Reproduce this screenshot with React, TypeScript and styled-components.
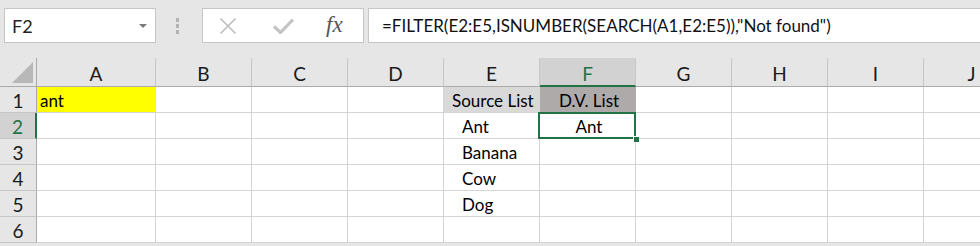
import React from "react";
import styled, { createGlobalStyle, css } from "styled-components";

const Global = createGlobalStyle`
  html, body { margin: 0; padding: 0; background: #e6e6e6; overflow: hidden; }
  body { font-family: Lato, "Noto Sans", sans-serif; }
`;

const Page = styled.div`
  width: 980px;
  height: 246px;
  background: #e6e6e6;
  overflow: hidden;
`;

const Toolbar = styled.div`
  height: 58px;
  display: flex;
  align-items: flex-start;
  padding: 8px 0 0 4px;
  box-sizing: border-box;
`;

const NameBox = styled.div`
  width: 152px;
  height: 35px;
  box-sizing: border-box;
  background: #fff;
  border: 1px solid #c6c6c6;
  display: flex;
  align-items: center;
  justify-content: space-between;
  padding: 0 8px 0 7px;
  font-size: 18px;
  color: #222;
`;

const Caret = styled.span`
  width: 0;
  height: 0;
  border-left: 4px solid transparent;
  border-right: 4px solid transparent;
  border-top: 4px solid #7a7a7a;
`;

const Grip = styled.div`
  width: 4px;
  margin: 10px 22px 0 20px;
  display: flex;
  flex-direction: column;
  gap: 2px;
  span { display: block; width: 3px; height: 4px; background: #b3b3b3; }
`;

const IconBox = styled.div`
  width: 162px;
  height: 35px;
  box-sizing: border-box;
  background: #fff;
  border: 1px solid #c6c6c6;
  display: flex;
  align-items: center;
  padding-left: 16px;
`;

const IconSlot = styled.div<{ $w: number }>`
  width: ${(p) => p.$w}px;
  display: flex;
  align-items: center;
`;

const Fx = styled.span`
  font-family: "Liberation Serif", serif;
  font-style: italic;
  font-size: 23px;
  color: #555;
  margin-top: -2px;
`;

const FormulaInput = styled.div`
  margin-left: 4px;
  flex: 1;
  height: 35px;
  box-sizing: border-box;
  background: #fff;
  border: 1px solid #c6c6c6;
  border-right: none;
  display: flex;
  align-items: center;
  padding-left: 13px;
  font-size: 17px;
  color: #111;
  white-space: nowrap;
`;

const COLS = [37, 119, 96, 96, 96, 96, 96, 96, 96, 96, 96];

const Grid = styled.div`
  display: grid;
  grid-template-columns: ${COLS.map((c) => c + "px").join(" ")};
  grid-template-rows: 29px repeat(6, 26px);
  background: #fff;
`;

const Corner = styled.div`
  background: #e6e6e6;
  border-right: 1px solid #ababab;
  border-bottom: 1px solid #ababab;
  position: relative;
  &::after {
    content: "";
    position: absolute;
    right: 3px;
    bottom: 3px;
    width: 0;
    height: 0;
    border-left: 21px solid transparent;
    border-bottom: 21px solid #b8b8b8;
  }
`;

const ColHead = styled.div<{ $sel?: boolean }>`
  background: ${(p) => (p.$sel ? "#d2d2d2" : "#e6e6e6")};
  color: ${(p) => (p.$sel ? "#217346" : "#1a1a1a")};
  border-right: 1px solid #c6c6c6;
  border-bottom: ${(p) => (p.$sel ? "2px solid #217346" : "1px solid #ababab")};
  font-size: 19px;
  display: flex;
  align-items: center;
  justify-content: center;
  padding-top: 3px;
  box-sizing: border-box;
`;

const RowHead = styled.div<{ $sel?: boolean }>`
  background: ${(p) => (p.$sel ? "#d2d2d2" : "#e6e6e6")};
  color: ${(p) => (p.$sel ? "#217346" : "#1a1a1a")};
  border-right: ${(p) => (p.$sel ? "2px solid #217346" : "1px solid #ababab")};
  border-bottom: 1px solid #c6c6c6;
  font-size: 19px;
  display: flex;
  align-items: center;
  justify-content: center;
  padding-top: 1px;
  box-sizing: border-box;
`;

const Cell = styled.div<{
  $bg?: string;
  $align?: "left" | "center";
  $indent?: number;
  $sel?: boolean;
}>`
  position: relative;
  background: ${(p) => p.$bg || "#fff"};
  border-right: 1px solid ${(p) => (p.$bg ? p.$bg : "#d4d4d4")};
  border-bottom: 1px solid #d4d4d4;
  font-size: 17px;
  color: #000;
  display: flex;
  align-items: flex-end;
  justify-content: ${(p) => (p.$align === "center" ? "center" : "flex-start")};
  padding: 0 0 1px ${(p) => p.$indent ?? 3}px;
  box-sizing: border-box;
  white-space: nowrap;
  ${(p) =>
    p.$sel &&
    css`
      z-index: 2;
      &::before {
        content: "";
        position: absolute;
        left: -2px;
        top: -1px;
        right: -1px;
        bottom: -1px;
        border: 2px solid #217346;
        pointer-events: none;
      }
      &::after {
        content: "";
        position: absolute;
        right: -4px;
        bottom: -4px;
        width: 5px;
        height: 5px;
        background: #217346;
        border-left: 1px solid #fff;
        border-top: 1px solid #fff;
      }
    `}
`;

type CellData = {
  text?: string;
  bg?: string;
  align?: "left" | "center";
  indent?: number;
  sel?: boolean;
};

const letters = ["A", "B", "C", "D", "E", "F", "G", "H", "I", "J"];

const data: Record<string, CellData> = {
  A1: { text: "ant", bg: "#ffff00" },
  E1: { text: "Source List", bg: "#d9d9d9", indent: 8 },
  F1: { text: "D.V. List", bg: "#aeaaaa", align: "center" },
  E2: { text: "Ant", indent: 18 },
  F2: { text: "Ant", align: "center", sel: true },
  E3: { text: "Banana", indent: 18 },
  E4: { text: "Cow", indent: 18 },
  E5: { text: "Dog", indent: 18 },
};

export default function App() {
  return (
    <Page>
      <Global />
      <Toolbar>
        <NameBox>
          F2
          <Caret />
        </NameBox>
        <Grip>
          <span />
          <span />
          <span />
        </Grip>
        <IconBox>
          <IconSlot $w={54}>
            <svg width="18" height="18" viewBox="0 0 18 18">
              <path d="M1.5 1.5 L16.5 16.5 M16.5 1.5 L1.5 16.5" stroke="#bdbdbd" strokeWidth="1.6" fill="none" />
            </svg>
          </IconSlot>
          <IconSlot $w={53}>
            <svg width="21" height="16" viewBox="0 0 21 16">
              <path d="M1 8.5 L7.5 14.5 L20 1.5" stroke="#c4c4c4" strokeWidth="3.2" fill="none" />
            </svg>
          </IconSlot>
          <IconSlot $w={30}>
            <Fx>fx</Fx>
          </IconSlot>
        </IconBox>
        <FormulaInput>=FILTER(E2:E5,ISNUMBER(SEARCH(A1,E2:E5)),"Not found")</FormulaInput>
      </Toolbar>
      <Grid>
        <Corner />
        {letters.map((l) => (
          <ColHead key={l} $sel={l === "F"}>
            {l}
          </ColHead>
        ))}
        {[1, 2, 3, 4, 5, 6].map((r) => (
          <React.Fragment key={r}>
            <RowHead $sel={r === 2}>{r}</RowHead>
            {letters.map((l) => {
              const d = data[l + r] || {};
              return (
                <Cell key={l + r} $bg={d.bg} $align={d.align} $indent={d.indent} $sel={d.sel}>
                  {d.text}
                </Cell>
              );
            })}
          </React.Fragment>
        ))}
      </Grid>
    </Page>
  );
}
